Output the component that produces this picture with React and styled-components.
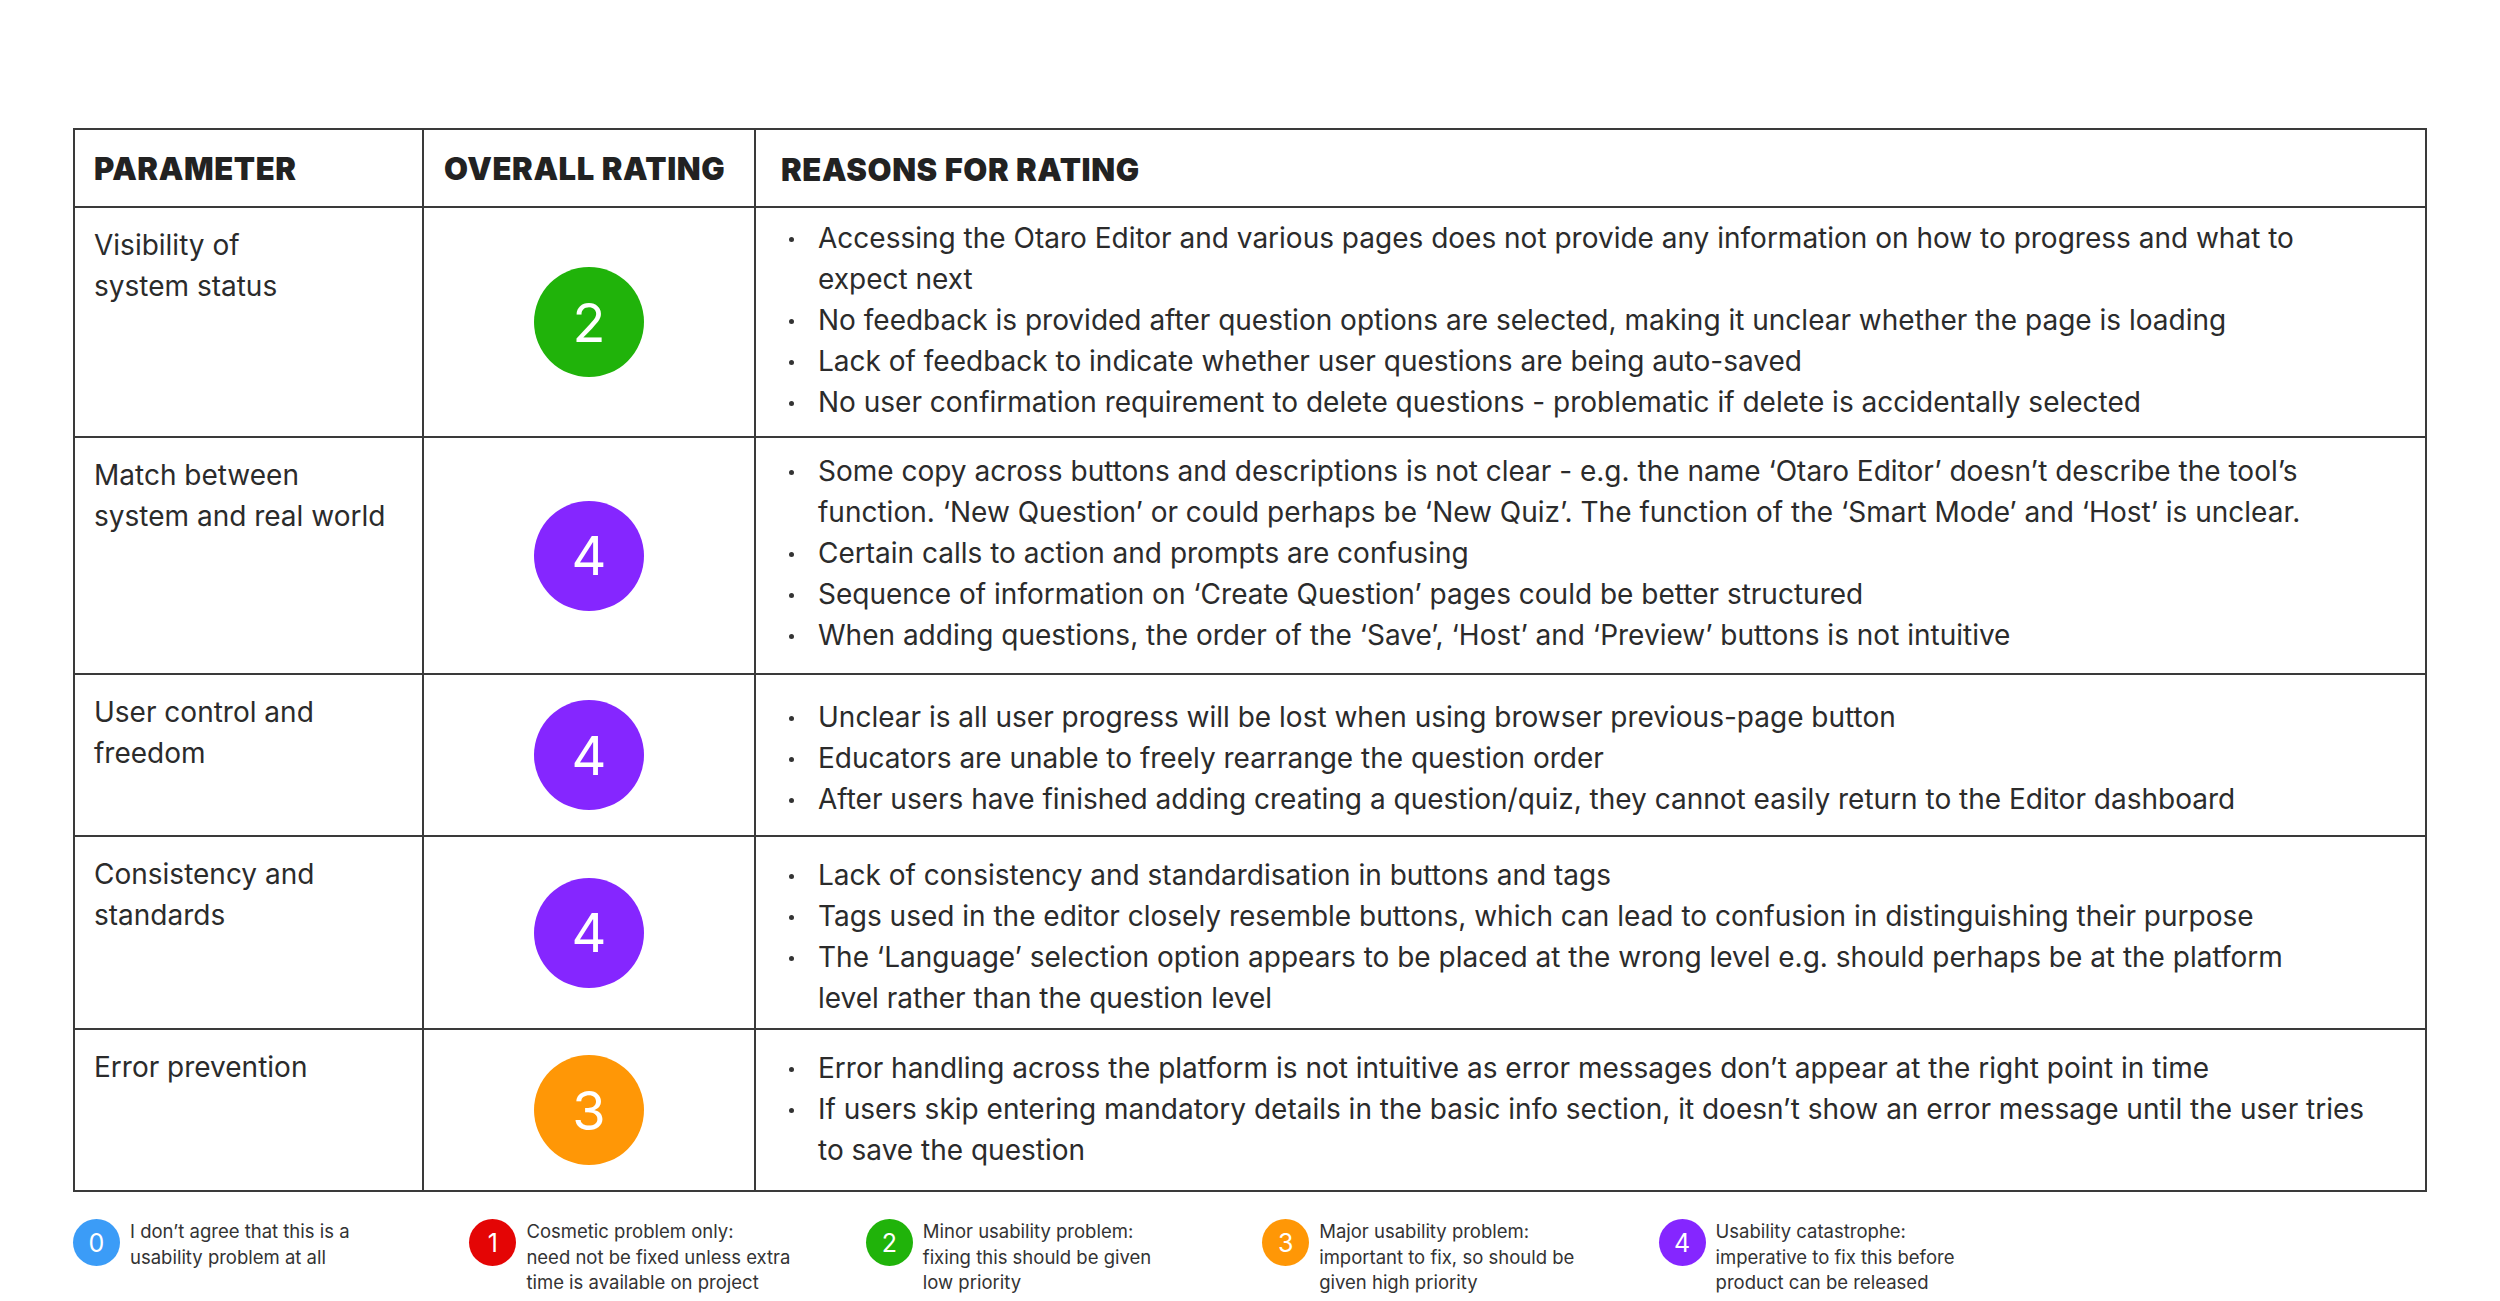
import React from "react";
import styled, { createGlobalStyle } from "styled-components";

const GlobalStyle = createGlobalStyle`
  body {
    margin: 0;
    background: #ffffff;
    font-family: Inter, "Liberation Sans", sans-serif;
    color: #2b2b2b;
  }
`;

const COLORS = {
  0: "#3b9cf7",
  1: "#e40505",
  2: "#20b30a",
  3: "#ff9706",
  4: "#8526ff",
};

const Page = styled.div`
  padding: 128px 0 0 73px;
  width: 2354px;
`;

const Table = styled.div`
  border-top: 2px solid #3a3a3a;
  border-left: 2px solid #3a3a3a;
`;

const Row = styled.div`
  display: grid;
  grid-template-columns: 349px 332px 1fr;
  height: ${(p) => p.$height}px;
`;

const Cell = styled.div`
  border-right: 2px solid #3a3a3a;
  border-bottom: 2px solid #3a3a3a;
  box-sizing: border-box;
`;

const HeadCell = styled(Cell)`
  display: flex;
  align-items: center;
  padding-left: ${(p) => p.$pad}px;
  padding-top: ${(p) => p.$top || 0}px;
  font-size: 31px;
  font-weight: 900;
  letter-spacing: 0.6px;
  color: #222;
`;

const ParamCell = styled(Cell)`
  padding: 17px 0 0 19px;
  font-size: 28px;
  line-height: 41px;
`;

const RatingCell = styled(Cell)`
  display: flex;
  align-items: center;
  justify-content: center;
`;

const Badge = styled.div`
  width: ${(p) => p.$size}px;
  height: ${(p) => p.$size}px;
  border-radius: 50%;
  background: ${(p) => COLORS[p.$value]};
  color: #fff;
  display: flex;
  align-items: center;
  justify-content: center;
  font-size: ${(p) => p.$font}px;
  font-weight: 400;
  flex-shrink: 0;
`;

const ReasonCell = styled(Cell)`
  padding-top: ${(p) => p.$top}px;
  font-size: 28px;
  line-height: 41px;
`;

const Item = styled.div`
  display: flex;
`;

const Marker = styled.div`
  width: 62px;
  flex-shrink: 0;
  display: flex;
  justify-content: flex-start;
  padding-left: 33px;
  box-sizing: border-box;
  padding-top: 19px;
  &::before {
    content: "";
    width: 5px;
    height: 5px;
    border-radius: 50%;
    background: #333;
  }
`;

const Line = styled.div`
  white-space: nowrap;
`;

const Legend = styled.div`
  display: grid;
  grid-template-columns: repeat(5, 396.4px);
  margin-top: 27px;
`;

const LegendItem = styled.div`
  display: flex;
  gap: 10px;
`;

const LegendText = styled.div`
  font-size: 18.5px;
  line-height: 25.5px;
  color: #333;
`;

const rows = [
  {
    height: 230,
    top: 10,
    rating: 2,
    param: ["Visibility of", "system status"],
    reasons: [
      [
        "Accessing the Otaro Editor and various pages does not provide any information on how to progress and what to",
        "expect next",
      ],
      ["No feedback is provided after question options are selected, making it unclear whether the page is loading"],
      ["Lack of feedback to indicate whether user questions are being auto-saved"],
      ["No user confirmation requirement to delete questions - problematic if delete is accidentally selected"],
    ],
  },
  {
    height: 237,
    top: 13,
    rating: 4,
    param: ["Match between", "system and real world"],
    reasons: [
      [
        "Some copy across buttons and descriptions is not clear - e.g. the name \u2018Otaro Editor\u2019 doesn\u2019t describe the tool\u2019s",
        "function. \u2018New Question\u2019 or could perhaps be \u2018New Quiz\u2019. The function of the \u2018Smart Mode\u2019 and \u2018Host\u2019 is unclear.",
      ],
      ["Certain calls to action and prompts are confusing"],
      ["Sequence of information on \u2018Create Question\u2019 pages could be better structured"],
      ["When adding questions, the order of the \u2018Save\u2019, \u2018Host\u2019 and \u2018Preview\u2019 buttons is not intuitive"],
    ],
  },
  {
    height: 162,
    top: 22,
    rating: 4,
    param: ["User control and", "freedom"],
    reasons: [
      ["Unclear is all user progress will be lost when using browser previous-page button"],
      ["Educators are unable to freely rearrange the question order"],
      ["After users have finished adding creating a question/quiz, they cannot easily return to the Editor dashboard"],
    ],
  },
  {
    height: 193,
    top: 18,
    rating: 4,
    param: ["Consistency and", "standards"],
    reasons: [
      ["Lack of consistency and standardisation in buttons and tags"],
      ["Tags used in the editor closely resemble buttons, which can lead to confusion in distinguishing their purpose"],
      [
        "The \u2018Language\u2019 selection option appears to be placed at the wrong level e.g. should perhaps be at the platform",
        "level rather than the question level",
      ],
    ],
  },
  {
    height: 162,
    top: 18,
    rating: 3,
    param: ["Error prevention"],
    reasons: [
      ["Error handling across the platform is not intuitive as error messages don\u2019t appear at the right point in time"],
      [
        "If users skip entering mandatory details in the basic info section, it doesn\u2019t show an error message until the user tries",
        "to save the question",
      ],
    ],
  },
];

const legend = [
  { value: 0, lines: ["I don\u2019t agree that this is a", "usability problem at all"] },
  { value: 1, lines: ["Cosmetic problem only:", "need not be fixed unless extra", "time is available on project"] },
  { value: 2, lines: ["Minor usability problem:", "fixing this should be given", "low priority"] },
  { value: 3, lines: ["Major usability problem:", "important to fix, so should be", "given high priority"] },
  { value: 4, lines: ["Usability catastrophe:", "imperative to fix this before", "product can be released"] },
];

export default function App() {
  return (
    <>
      <GlobalStyle />
      <Page>
        <Table>
          <Row $height={78}>
            <HeadCell $pad={19}>PARAMETER</HeadCell>
            <HeadCell $pad={20}>OVERALL RATING</HeadCell>
            <HeadCell $pad={25} $top={3}>REASONS FOR RATING</HeadCell>
          </Row>
          {rows.map((row, i) => (
            <Row key={i} $height={row.height}>
              <ParamCell>
                {row.param.map((l) => (
                  <Line key={l}>{l}</Line>
                ))}
              </ParamCell>
              <RatingCell>
                <Badge $value={row.rating} $size={110} $font={54}>
                  {row.rating}
                </Badge>
              </RatingCell>
              <ReasonCell $top={row.top}>
                {row.reasons.map((lines, j) => (
                  <Item key={j}>
                    <Marker />
                    <div>
                      {lines.map((l) => (
                        <Line key={l}>{l}</Line>
                      ))}
                    </div>
                  </Item>
                ))}
              </ReasonCell>
            </Row>
          ))}
        </Table>
        <Legend>
          {legend.map((item) => (
            <LegendItem key={item.value}>
              <Badge $value={item.value} $size={47} $font={25}>
                {item.value}
              </Badge>
              <LegendText>
                {item.lines.map((l) => (
                  <Line key={l}>{l}</Line>
                ))}
              </LegendText>
            </LegendItem>
          ))}
        </Legend>
      </Page>
    </>
  );
}
